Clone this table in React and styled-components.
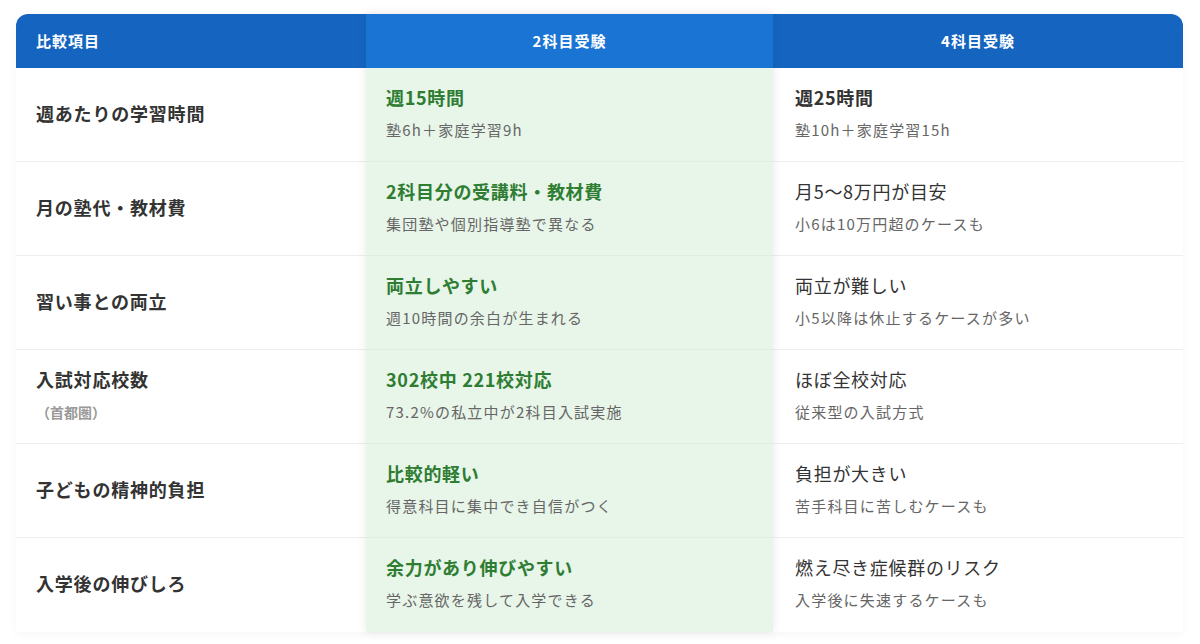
import React from "react";
import styled, { createGlobalStyle, css } from "styled-components";

const GlobalStyle = createGlobalStyle`
  html, body { margin: 0; padding: 0; background: #ffffff; }
  body {
    font-family: "Noto Sans CJK JP", "Noto Sans", sans-serif;
    color: #333;
    -webkit-font-smoothing: antialiased;
  }
  * { box-sizing: border-box; }
`;

const Page = styled.div`
  padding: 14px 17px 14px 16px;
`;

const Table = styled.div`
  display: flex;
  align-items: stretch;
  border-radius: 12px 12px 0 0;
  box-shadow: 0 2px 10px rgba(0, 0, 0, 0.04);
`;

const Column = styled.div`
  display: flex;
  flex-direction: column;
  flex: ${(p) => p.$flex};
  min-width: 0;
  background: #fff;
  ${(p) =>
    p.$highlight &&
    css`
      position: relative;
      z-index: 1;
      background: #e8f5e9;
      box-shadow: 0 0 10px rgba(0, 0, 0, 0.09);
    `}
  ${(p) => p.$first && css`border-top-left-radius: 12px;`}
  ${(p) => p.$last && css`border-top-right-radius: 12px;`}
`;

const HeaderCell = styled.div`
  height: 54px;
  display: flex;
  align-items: center;
  justify-content: ${(p) => (p.$align === "left" ? "flex-start" : "center")};
  padding: 0 20px 1px;
  background: ${(p) => (p.$highlight ? "#1a74d4" : "#1565c0")};
  color: #fff;
  font-size: 15px;
  font-weight: 700;
  letter-spacing: 1px;
  line-height: 22px;
  border-radius: ${(p) => p.$radius || "0"};
`;

const Cell = styled.div`
  height: 94px;
  display: flex;
  flex-direction: column;
  justify-content: center;
  gap: 10px;
  padding: 0 20px 4px ${(p) => p.$padLeft || "20px"};
  border-bottom: 1px solid ${(p) => (p.$highlight ? "rgba(0,0,0,0.03)" : "#eeeeee")};
  &:last-child { border-bottom: none; }
`;

const RowTitle = styled.div`
  font-size: 18px;
  font-weight: 700;
  line-height: 24px;
  letter-spacing: 0.8px;
  color: #333;
`;

const RowNote = styled.div`
  font-size: 14px;
  font-weight: 700;
  line-height: 22px;
  color: #999;
`;

const Main = styled.div`
  font-size: 18px;
  line-height: 24px;
  letter-spacing: 0.7px;
  font-weight: ${(p) => (p.$bold ? 700 : 400)};
  color: ${(p) => (p.$green ? "#2e7d32" : "#333")};
`;

const Sub = styled.div`
  font-size: 15px;
  line-height: 22px;
  letter-spacing: 1.2px;
  color: #666;
`;

const rows = [
  {
    title: "週あたりの学習時間",
    a: ["週15時間", "塾6h＋家庭学習9h"],
    b: ["週25時間", "塾10h＋家庭学習15h", true],
  },
  {
    title: "月の塾代・教材費",
    a: ["2科目分の受講料・教材費", "集団塾や個別指導塾で異なる"],
    b: ["月5〜8万円が目安", "小6は10万円超のケースも"],
  },
  {
    title: "習い事との両立",
    a: ["両立しやすい", "週10時間の余白が生まれる"],
    b: ["両立が難しい", "小5以降は休止するケースが多い"],
  },
  {
    title: "入試対応校数",
    note: "（首都圏）",
    a: ["302校中 221校対応", "73.2%の私立中が2科目入試実施"],
    b: ["ほぼ全校対応", "従来型の入試方式"],
  },
  {
    title: "子どもの精神的負担",
    a: ["比較的軽い", "得意科目に集中でき自信がつく"],
    b: ["負担が大きい", "苦手科目に苦しむケースも"],
  },
  {
    title: "入学後の伸びしろ",
    a: ["余力があり伸びやすい", "学ぶ意欲を残して入学できる"],
    b: ["燃え尽き症候群のリスク", "入学後に失速するケースも"],
  },
];

export default function App() {
  return (
    <>
      <GlobalStyle />
      <Page>
        <Table>
          <Column $flex="0 0 350px" $first>
            <HeaderCell $align="left" $radius="12px 0 0 0">比較項目</HeaderCell>
            {rows.map((r) => (
              <Cell key={r.title}>
                <RowTitle>{r.title}</RowTitle>
                {r.note && <RowNote>{r.note}</RowNote>}
              </Cell>
            ))}
          </Column>
          <Column $flex="0 0 407px" $highlight>
            <HeaderCell $highlight>2科目受験</HeaderCell>
            {rows.map((r) => (
              <Cell key={r.title} $highlight>
                <Main $bold $green>{r.a[0]}</Main>
                <Sub>{r.a[1]}</Sub>
              </Cell>
            ))}
          </Column>
          <Column $flex="1 1 auto" $last>
            <HeaderCell $radius="0 12px 0 0">4科目受験</HeaderCell>
            {rows.map((r) => (
              <Cell key={r.title} $padLeft="22px">
                <Main $bold={r.b[2]}>{r.b[0]}</Main>
                <Sub>{r.b[1]}</Sub>
              </Cell>
            ))}
          </Column>
        </Table>
      </Page>
    </>
  );
}
